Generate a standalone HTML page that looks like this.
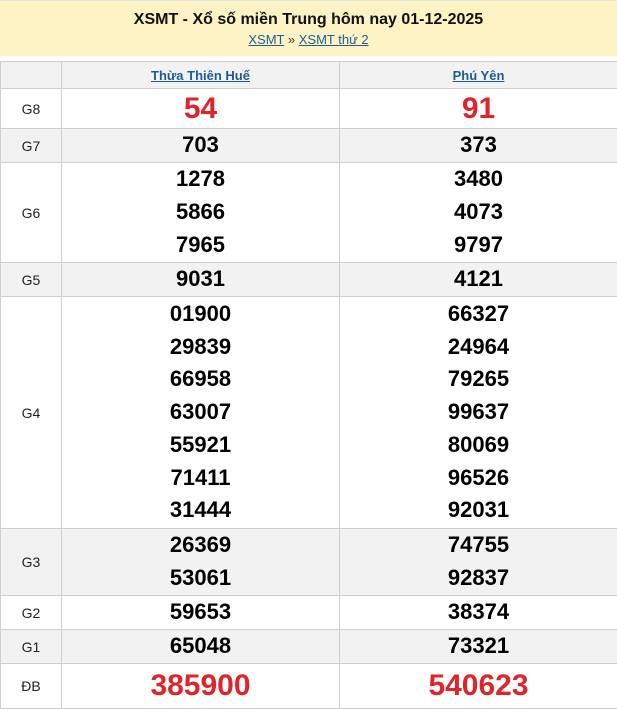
<!DOCTYPE html><html><head><meta charset="utf-8"><style>
*{margin:0;padding:0;box-sizing:border-box}
body{width:617px;height:710px;background:#fff;font-family:"Liberation Sans",Arial,sans-serif;position:relative;overflow:hidden}
.hd{position:absolute;left:0;top:0;width:617px;height:56px;background:#fdf3c4;text-align:center;border-top:1px solid #e4e4e4}
.hd h1{font-size:16px;font-weight:bold;color:#111;padding-top:10px;line-height:18px}
.hd p{font-size:13px;color:#333;line-height:16px;margin-top:3px}
.hd a{color:#1e5c94;text-decoration:underline}
table{position:absolute;left:0;top:61px;width:618px;border-collapse:collapse;table-layout:fixed}
td{border:1px solid #cfcfcf;text-align:center;vertical-align:middle;padding:0}
td.l{font-size:14px;color:#222}
td.n{font-size:22px;font-weight:bold;color:#000;line-height:32.7px}
td.r{font-size:30px;font-weight:bold;color:#e0242b}
tr.g td{background:#f2f2f2}
th{border:1px solid #cfcfcf;background:#f2f2f2;font-size:13px;font-weight:bold;height:27px}
th a{color:#1e5c94;text-decoration:underline}
</style></head><body>
<div class="hd"><h1>XSMT - Xổ số miền Trung hôm nay 01-12-2025</h1><p><a>XSMT</a> » <a>XSMT thứ 2</a></p></div>
<table>
<colgroup><col style="width:61px"><col style="width:278px"><col></colgroup>
<tr><th></th><th><a>Thừa Thiên Huế</a></th><th><a>Phú Yên</a></th></tr>
<tr style="height:40px"><td class="l">G8</td><td class="r">54</td><td class="r">91</td></tr>
<tr class="g" style="height:34px"><td class="l">G7</td><td class="n">703</td><td class="n">373</td></tr>
<tr style="height:100px"><td class="l">G6</td><td class="n">1278<br>5866<br>7965</td><td class="n">3480<br>4073<br>9797</td></tr>
<tr class="g" style="height:34px"><td class="l">G5</td><td class="n">9031</td><td class="n">4121</td></tr>
<tr style="height:232px"><td class="l">G4</td><td class="n">01900<br>29839<br>66958<br>63007<br>55921<br>71411<br>31444</td><td class="n">66327<br>24964<br>79265<br>99637<br>80069<br>96526<br>92031</td></tr>
<tr class="g" style="height:67px"><td class="l">G3</td><td class="n">26369<br>53061</td><td class="n">74755<br>92837</td></tr>
<tr style="height:34px"><td class="l">G2</td><td class="n">59653</td><td class="n">38374</td></tr>
<tr class="g" style="height:34px"><td class="l">G1</td><td class="n">65048</td><td class="n">73321</td></tr>
<tr style="height:45px"><td class="l">ĐB</td><td class="r">385900</td><td class="r">540623</td></tr>
</table>
</body></html>
